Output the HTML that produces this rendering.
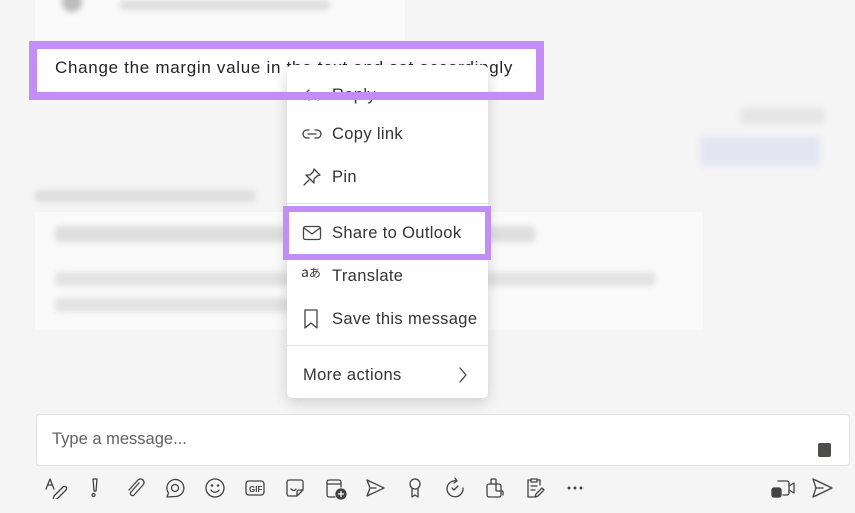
<!DOCTYPE html>
<html><head><meta charset="utf-8">
<style>
*{margin:0;padding:0;box-sizing:border-box}
body{width:855px;height:513px;background:#f5f5f5;font-family:"Liberation Sans",sans-serif;position:relative;overflow:hidden;color:#242424}
.abs{position:absolute}
.blur{filter:blur(3px);background:#cfcfcf;border-radius:4px}
.card{background:#fafafa}
.mi{position:absolute;left:0;width:201px;height:40px;display:flex;align-items:center;font-size:16.5px;color:#333;letter-spacing:.35px}
.mi svg{position:absolute;left:15px}
.mi span{position:absolute;left:45px}
svg{fill:none;stroke:#424242;stroke-width:1.3;stroke-linecap:round;stroke-linejoin:round}
.tb svg{position:absolute;top:477px}
</style></head><body>
<div class="abs card" style="left:35px;top:0;width:370px;height:40px"></div>
<div class="abs blur" style="left:62px;top:-8px;width:20px;height:20px;border-radius:50%;background:#bbb"></div>
<div class="abs blur" style="left:120px;top:0;width:210px;height:10px;background:#ddd"></div>
<div class="abs blur" style="left:740px;top:108px;width:85px;height:16px;background:#e6e6e6"></div>
<div class="abs blur" style="left:700px;top:136px;width:120px;height:30px;background:#e4e5f3"></div>
<div class="abs blur" style="left:35px;top:190px;width:220px;height:12px;background:#ddd"></div>
<div class="abs card" style="left:35px;top:212px;width:668px;height:118px;background:#fafafa"></div>
<div class="abs blur" style="left:55px;top:226px;width:480px;height:16px;background:#dedede"></div>
<div class="abs blur" style="left:55px;top:272px;width:600px;height:14px;background:#e2e2e2"></div>
<div class="abs blur" style="left:55px;top:298px;width:240px;height:14px;background:#e2e2e2"></div>

<div class="abs" style="left:37px;top:49px;width:499px;height:42px;background:#fff"></div>
<div class="abs" style="left:55px;top:58px;font-size:17px;letter-spacing:.7px;color:#242424;white-space:nowrap">Change the margin value in the text and set accordingly</div>

<div class="abs" style="left:287px;top:65px;width:201px;height:333px;background:#fff;border-radius:5px;box-shadow:0 4px 14px rgba(0,0,0,.16)">
  <div class="mi" style="top:10px"><svg width="18" height="18" viewBox="0 0 18 18"><path d="M7 4L2 9l5 5M2 9h9a5 5 0 015 5"/></svg><span>Reply</span></div>
  <div class="mi" style="top:49px"><svg width="20" height="18" viewBox="0 0 20 18"><path d="M7 5H5a4 4 0 000 8h2M13 5h2a4 4 0 010 8h-2M6 9h8"/></svg><span>Copy link</span></div>
  <div class="mi" style="top:92px"><svg width="20" height="20" viewBox="0 0 20 20"><path d="M12 2l6 6-3 1-3 3 0 4-8-8 4 0 3-3zM7 13l-5 5"/></svg><span>Pin</span></div>
  <div class="abs" style="left:0;top:138px;width:201px;height:1px;background:#e0e0e0"></div>
  <div class="mi" style="top:148px"><svg width="20" height="18" viewBox="0 0 20 18"><rect x="1.5" y="2.5" width="17" height="13" rx="2"/><path d="M2 4l8 6 8-6"/></svg><span>Share to Outlook</span></div>
  <div class="mi" style="top:191px"><span style="left:14px;font-family:'Noto Sans CJK JP',sans-serif;font-size:14px;top:6px;letter-spacing:0">a<span style="position:static;font-size:12px">あ</span></span><span>Translate</span></div>
  <div class="mi" style="top:234px"><svg width="18" height="22" viewBox="0 0 18 22"><path d="M3 2h12v18l-6-5-6 5z"/></svg><span>Save this message</span></div>
  <div class="abs" style="left:0;top:280px;width:201px;height:1px;background:#e0e0e0"></div>
  <div class="mi" style="top:290px"><span style="left:16px">More actions</span><svg style="left:170px" width="12" height="18" viewBox="0 0 12 18"><path d="M3 2l6 7-6 7"/></svg></div>
</div>

<div class="abs" style="left:29px;top:41px;width:515px;height:59px;border:8px solid #c28ef6"></div>
<div class="abs" style="left:283px;top:206px;width:208px;height:54px;border:6px solid #c28ef6"></div>

<div class="abs" style="left:36px;top:414px;width:814px;height:52px;background:#fff;border:1px solid #e3e3e3;border-radius:4px"></div>
<div class="abs" style="left:52px;top:430px;font-size:16.5px;color:#616161">Type a message...</div>
<div class="abs" style="left:818px;top:443px;width:13px;height:14px;background:#4a4f4c;border-radius:2px"></div>

<div class="tb">
<svg style="left:44px" width="24" height="22" viewBox="0 0 24 22"><path d="M2 12L6 2l4 10M3.5 8h5M10 19l9-9a2 2 0 013 3l-9 9-4 1z"/></svg>
<svg style="left:88px" width="14" height="22" viewBox="0 0 14 22"><path d="M5 2h4l-1 12H6zM7 18a1.5 1.5 0 100 .1"/></svg>
<svg style="left:125px" width="20" height="22" viewBox="0 0 20 22"><path d="M14 6l-8 9a2 2 0 003 3l9-10a3.5 3.5 0 00-5-5L4 13"/></svg>
<svg style="left:164px" width="22" height="22" viewBox="0 0 22 22"><path d="M3 20l1.5-4A8.5 8.5 0 1111 19.5z"/><circle cx="11" cy="11" r="3.5"/></svg>
<svg style="left:204px" width="22" height="22" viewBox="0 0 22 22"><circle cx="11" cy="11" r="9"/><path d="M7 13c2 3 6 3 8 0"/><circle cx="8" cy="8.5" r=".6"/><circle cx="14" cy="8.5" r=".6"/></svg>
<svg style="left:244px" width="22" height="22" viewBox="0 0 22 22"><rect x="2" y="4" width="18" height="14" rx="3"/><text x="5" y="15" font-size="8" font-family="Liberation Sans" fill="#424242" stroke="none" font-weight="bold">GIF</text></svg>
<svg style="left:284px" width="22" height="22" viewBox="0 0 22 22"><path d="M3 5a2 2 0 012-2h12a2 2 0 012 2v8l-6 6H5a2 2 0 01-2-2zM13 19v-4a2 2 0 012-2h4M7 12c2 2 4 2 5 0"/></svg>
<svg style="left:324px" width="24" height="24" viewBox="0 0 24 24"><path d="M11 20H5a2 2 0 01-2-2V5a2 2 0 012-2h10a2 2 0 012 2v5M3 7h14"/><circle cx="17" cy="17" r="5" fill="#424242"/><path d="M17 14.5v5M14.5 17h5" stroke="#fff"/></svg>
<svg style="left:364px" width="22" height="22" viewBox="0 0 22 22"><path d="M3 3l17 8-17 8 3-8zM6 11h6"/></svg>
<svg style="left:405px" width="20" height="22" viewBox="0 0 20 22"><circle cx="10" cy="7" r="5"/><path d="M7 11v9l3-2 3 2v-9"/></svg>
<svg style="left:444px" width="22" height="22" viewBox="0 0 22 22"><path d="M13 4A8 8 0 1019 11M11 1l2 3-3 2M8 11l2 2 4-4"/></svg>
<svg style="left:484px" width="22" height="22" viewBox="0 0 22 22"><rect x="3" y="7" width="14" height="13" rx="2"/><path d="M7 7V3a1 1 0 011-1h3a1 1 0 011 1v10a1 1 0 001 1h5a1 1 0 011 1v3"/></svg>
<svg style="left:524px" width="22" height="22" viewBox="0 0 22 22"><path d="M6 3H4v17h8M14 3h2v5M7 2h6v3H7zM7 9h6M7 13h4M11 20l1-3 6-6 2 2-6 6z"/></svg>
<svg style="left:564px" width="22" height="22" viewBox="0 0 22 22"><circle cx="5" cy="11" r=".8" fill="#424242"/><circle cx="11" cy="11" r=".8" fill="#424242"/><circle cx="17" cy="11" r=".8" fill="#424242"/></svg>
<svg style="left:770px" width="26" height="22" viewBox="0 0 26 22"><path d="M8 4h9a2 2 0 012 2v10a2 2 0 01-2 2h-4M19 9l5-3v10l-5-3"/><rect x="2" y="11" width="9" height="9" rx="2" fill="#424242"/></svg>
<svg style="left:810px" width="24" height="22" viewBox="0 0 24 22"><path d="M3 2l19 9-19 9 3-9zM6 11h7"/></svg>
</div>
</body></html>
